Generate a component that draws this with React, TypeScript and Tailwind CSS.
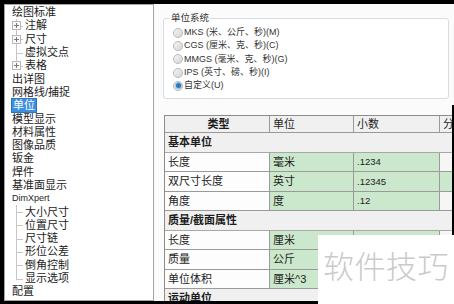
import React from "react";

type Prefix = "none" | "plus" | "plusLast" | "branch" | "last";

type TreeItem = { label: string; prefix: Prefix; latin?: boolean; selected?: boolean };

const tree: TreeItem[] = [
  { label: "绘图标准", prefix: "none" },
  { label: "注解", prefix: "plus" },
  { label: "尺寸", prefix: "plus" },
  { label: "虚拟交点", prefix: "branch" },
  { label: "表格", prefix: "plusLast" },
  { label: "出详图", prefix: "none" },
  { label: "网格线/捕捉", prefix: "none" },
  { label: "单位", prefix: "none", selected: true },
  { label: "模型显示", prefix: "none" },
  { label: "材料属性", prefix: "none" },
  { label: "图像品质", prefix: "none" },
  { label: "钣金", prefix: "none" },
  { label: "焊件", prefix: "none" },
  { label: "基准面显示", prefix: "none" },
  { label: "DimXpert", prefix: "none", latin: true },
  { label: "大小尺寸", prefix: "branch" },
  { label: "位置尺寸", prefix: "branch" },
  { label: "尺寸链", prefix: "branch" },
  { label: "形位公差", prefix: "branch" },
  { label: "倒角控制", prefix: "branch" },
  { label: "显示选项", prefix: "last" },
  { label: "配置", prefix: "none" },
];

const unitSystems = [
  { label: "MKS (米、公斤、秒)(M)", checked: false },
  { label: "CGS (厘米、克、秒)(C)", checked: false },
  { label: "MMGS (毫米、克、秒)(G)", checked: false },
  { label: "IPS (英寸、磅、秒)(I)", checked: false },
  { label: "自定义(U)", checked: true },
];

type Row =
  | { section: string }
  | { name: string; unit: string; dec: string; green4?: boolean };

// decimals of the lower rows sit under the watermark, so they stay empty
const rows: Row[] = [
  { section: "基本单位" },
  { name: "长度", unit: "毫米", dec: ".1234" },
  { name: "双尺寸长度", unit: "英寸", dec: ".12345", green4: true },
  { name: "角度", unit: "度", dec: ".12" },
  { section: "质量/截面属性" },
  { name: "长度", unit: "厘米", dec: "" },
  { name: "质量", unit: "公斤", dec: "" },
  { name: "单位体积", unit: "厘米^3", dec: "" },
  { section: "运动单位" },
];

function TreePrefix({ kind }: { kind: Prefix }) {
  if (kind === "none") return null;
  const last = kind === "last" || kind === "plusLast";
  const plus = kind === "plus" || kind === "plusLast";
  return (
    <span className="relative h-full w-[13px] shrink-0">
      <span className={`absolute left-[4px] top-0 w-px bg-[#c6c6c6] ${last ? "h-1/2" : "h-full"}`} />
      <span className="absolute left-[4px] top-1/2 h-px w-[7px] bg-[#c6c6c6]" />
      {plus && (
        <span className="absolute left-0 top-[2px] h-[9px] w-[9px] border border-[#b8b8b8] bg-[#fafafa]">
          <span className="absolute left-[1px] top-[3px] h-px w-[5px] bg-[#7a7a7a]" />
          <span className="absolute left-[3px] top-[1px] h-[5px] w-px bg-[#7a7a7a]" />
        </span>
      )}
    </span>
  );
}

function Radio({ checked }: { checked: boolean }) {
  return (
    <span className="flex h-[10px] w-[10px] shrink-0 items-center justify-center rounded-full border border-[#b9b9b9] bg-gradient-to-br from-[#f4f4f4] to-[#d6d6d6]">
      {checked && <span className="h-[5px] w-[5px] rounded-full bg-[#2c78c0] ring-1 ring-[#9cc6ea]" />}
    </span>
  );
}

const cell = "shrink-0 border-r border-b border-[#9a9a9a] pl-[3px] flex items-center";

export default function App() {
  return (
    <div className="relative h-[304px] w-[454px] overflow-hidden bg-black font-['Liberation_Sans','Noto_Sans_CJK_SC',sans-serif] text-[#1c1c1c]">
      <div className="flex h-full pb-[3px] pl-[4px] pt-[4px]">
        {/* tree */}
        <div className="w-[150px] shrink-0 border border-[#a5a5a5] bg-white pt-[1px]">
          {tree.map((t, i) => (
            <div key={i} className="flex h-[13.3px] items-center pl-[7px] text-[11px] leading-none">
              <TreePrefix kind={t.prefix} />
              {t.selected ? (
                <span className="-ml-px border border-[#2f74bd] bg-[#3d8fe0] px-px py-px text-white">{t.label}</span>
              ) : (
                <span className={t.latin ? "text-[9px]" : ""}>{t.label}</span>
              )}
            </div>
          ))}
        </div>

        {/* right side */}
        <div className="min-w-0 flex-1 overflow-hidden bg-[#fbfbfb]">
          <fieldset className="ml-[9px] mt-[8px] w-[286px] rounded-[3px] border border-[#d5dde2] bg-white pb-[6px] pl-[9px] pt-[2px]">
            <legend className="-ml-[3px] px-[1px] text-[9.5px] leading-[12px] text-[#333]">单位系统</legend>
            {unitSystems.map((u, i) => (
              <div key={i} className="flex h-[13.3px] items-center gap-[1px] text-[9px] leading-none text-[#333]">
                <Radio checked={u.checked} />
                <span>{u.label}</span>
              </div>
            ))}
          </fieldset>

          <div className="ml-[10px] mt-[16px] w-max border-l border-t border-[#8c8c8c] text-[11px] leading-none">
            <div className="flex h-[17px] bg-[#f0f0f0]">
              <div className={`${cell} w-[105px] justify-center border-[#8c8c8c] pl-0 font-bold`}>类型</div>
              <div className={`${cell} w-[84px] border-[#8c8c8c]`}>单位</div>
              <div className={`${cell} w-[86px] border-[#8c8c8c]`}>小数</div>
              <div className={`${cell} w-[60px] border-[#8c8c8c]`}>分</div>
            </div>
            {rows.map((r, i) =>
              "section" in r ? (
                <div key={i} className="flex h-[19.5px] w-[335px] items-center border-b border-[#a8a8a8] bg-[#f0f0f0] pl-[3px] font-bold">
                  {r.section}
                </div>
              ) : (
                <div key={i} className="flex h-[19.5px]">
                  <div className={`${cell} w-[105px] bg-[#fdfdfd] border-[#8a8a8a]`}>{r.name}</div>
                  <div className={`${cell} w-[84px] bg-[#cce8cc]`}>{r.unit}</div>
                  <div className={`${cell} w-[86px] bg-[#cce8cc] text-[9.5px]`}>{r.dec}</div>
                  <div className={`${cell} w-[60px] ${r.green4 ? "bg-[#cce8cc]" : "bg-[#f6f6f6]"}`} />
                </div>
              )
            )}
          </div>
        </div>
      </div>

      {/* screenshot edge */}
      <div className="absolute bottom-0 right-0 top-[105px] w-[2px] bg-black" />

      {/* watermark */}
      <div className="absolute left-[318px] top-[235px] flex h-[69px] w-[136px] items-center justify-center bg-white pb-[8px] font-['Noto_Sans_CJK_SC',sans-serif] text-[31px] font-light tracking-[0.5px] text-[#cacaca]">
        软件技巧
      </div>
    </div>
  );
}
